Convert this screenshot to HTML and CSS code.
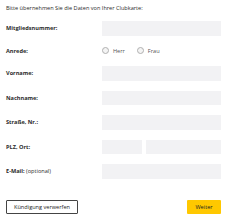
FILE: index.html
```html
<!DOCTYPE html>
<html lang="de">
<head>
    <meta charset="UTF-8">
    <meta name="viewport" content="width=device-width, initial-scale=1.0">
    <title>Clubkarte</title>
    <link rel="stylesheet" href="styles.css">
</head>
<body>
    <div class="page">
        <p class="intro">Bitte übernehmen Sie die Daten von Ihrer Clubkarte:</p>
        <form class="form">
            <label class="label">Mitgliedsnummer:</label>
            <input class="field" type="text">

            <label class="label">Anrede:</label>
            <div class="radios">
                <span class="radio"><span class="dot"></span>Herr</span>
                <span class="radio"><span class="dot"></span>Frau</span>
            </div>

            <label class="label">Vorname:</label>
            <input class="field" type="text">

            <label class="label">Nachname:</label>
            <input class="field" type="text">

            <label class="label">Straße, Nr.:</label>
            <input class="field" type="text">

            <label class="label">PLZ, Ort:</label>
            <div class="split">
                <input class="field" type="text">
                <input class="field" type="text">
            </div>

            <label class="label">E-Mail: <span class="opt">(optional)</span></label>
            <input class="field" type="text">
        </form>
        <div class="actions">
            <button class="btn btn-outline" type="button">Kündigung verwerfen</button>
            <button class="btn btn-primary" type="button">Weiter</button>
        </div>
    </div>
</body>
</html>
```

FILE: styles.css
```css
body {
    margin: 0;
    background-color: white;
    font-family: 'Open Sans', sans-serif;
    color: #2b2b2b;
}
.page {
    padding: 0 6px;
}
.intro {
    margin: 0;
    padding-top: 5px;
    font-size: 5.6px;
    line-height: 7px;
}
.form {
    display: grid;
    grid-template-columns: 96px 1fr;
    grid-template-rows: 14.5px 10.5px 14.5px 14.5px 14.5px 14.5px 14.5px;
    row-gap: 10px;
    margin-top: 9px;
    align-items: center;
}
.label {
    font-size: 5.6px;
    font-weight: bold;
}
.opt {
    font-weight: normal;
}
.field {
    display: block;
    box-sizing: border-box;
    width: 100%;
    height: 14.5px;
    margin: 0;
    border: none;
    background-color: #f2f2f4;
}
.radios {
    display: flex;
    gap: 12px;
    font-size: 5.6px;
    color: #555;
}
.radio {
    display: flex;
    align-items: center;
    gap: 4px;
}
.dot {
    box-sizing: border-box;
    width: 7px;
    height: 7px;
    border: 0.5px solid #b0b0b0;
    border-radius: 50%;
    background-color: #f4f4f4;
}
.split {
    display: grid;
    grid-template-columns: 40px 1fr;
    gap: 4px;
}
.actions {
    display: flex;
    justify-content: space-between;
    margin-top: 21.5px;
}
.btn {
    height: 14px;
    padding: 0;
    font-family: 'Open Sans', sans-serif;
    font-size: 5.6px;
    color: #222;
    border-radius: 1px;
}
.btn-outline {
    width: 72px;
    border: 1px solid #444;
    background-color: white;
}
.btn-primary {
    width: 34px;
    border: none;
    background-color: #ffc800;
}
```
